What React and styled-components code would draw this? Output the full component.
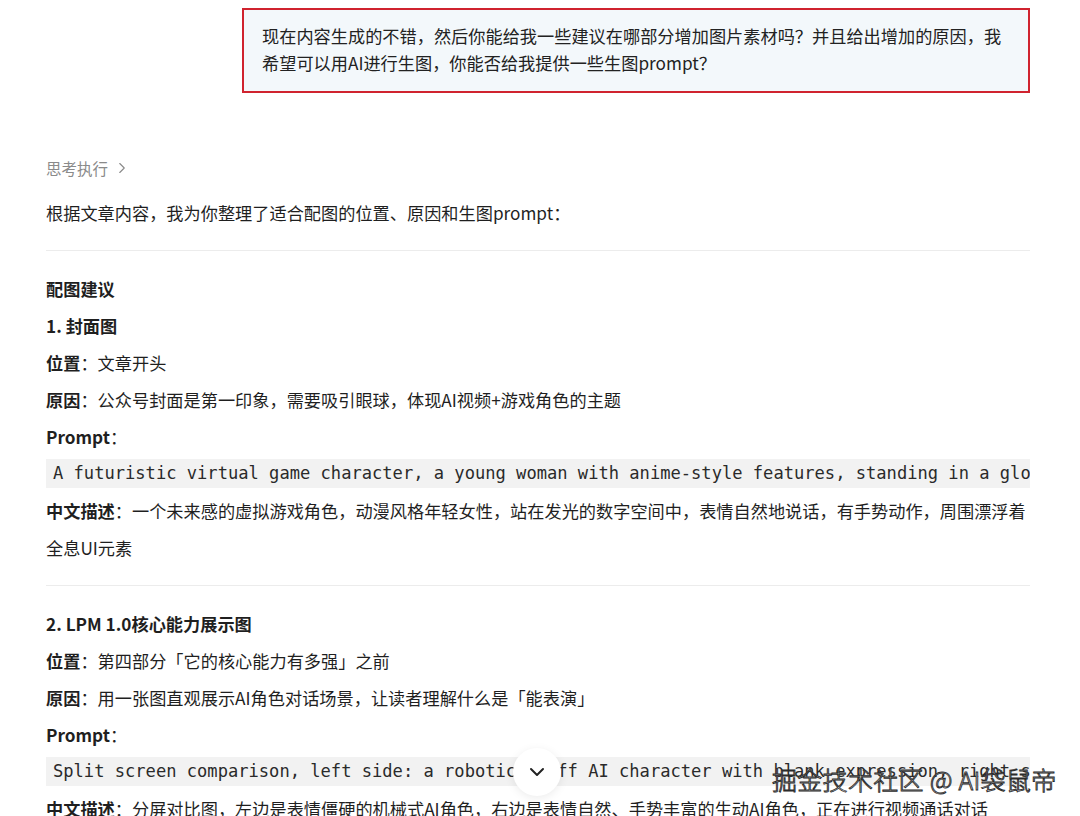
import React from 'react';
import styled, { createGlobalStyle } from 'styled-components';
import { ChevronRight, ChevronDown } from 'lucide-react';

const GlobalStyle = createGlobalStyle`
    html, body {
        margin: 0;
        padding: 0;
        background: #ffffff;
        overflow: hidden;
    }
    body {
        font-family: "Noto Sans CJK SC", "Noto Sans", sans-serif;
        color: #1f1f1f;
    }
`

const sections = [
    {
        title: '1. 封面图',
        position: '文章开头',
        reason: '公众号封面是第一印象，需要吸引眼球，体现AI视频+游戏角色的主题',
        prompt: 'A futuristic virtual game character, a young woman with anime-style features, standing in a glowing digital space, speaking naturally with hand gestures, holographic UI elements floating around',
        desc: '一个未来感的虚拟游戏角色，动漫风格年轻女性，站在发光的数字空间中，表情自然地说话，有手势动作，周围漂浮着全息UI元素',
    },
    {
        title: '2. LPM 1.0核心能力展示图',
        position: '第四部分「它的核心能力有多强」之前',
        reason: '用一张图直观展示AI角色对话场景，让读者理解什么是「能表演」',
        prompt: 'Split screen comparison, left side: a robotic stiff AI character with blank expression, right side: a lively AI character with natural expressions',
        desc: '分屏对比图，左边是表情僵硬的机械式AI角色，右边是表情自然、手势丰富的生动AI角色，正在进行视频通话对话',
    },
];

export default function App() {
    return (
        <Page>
            <GlobalStyle />
            {/* 用户提问 */}
            <UserBubble>
                现在内容生成的不错，然后你能给我一些建议在哪部分增加图片素材吗？并且给出增加的原因，我希望可以用AI进行生图，你能否给我提供一些生图prompt？
            </UserBubble>

            <ThinkRow>
                思考执行
                <ChevronRight size={18} strokeWidth={1.5} />
            </ThinkRow>
            <Para>根据文章内容，我为你整理了适合配图的位置、原因和生图prompt：</Para>
            <Divider />
            <Para $bold>配图建议</Para>

            {sections.map((s, i) => (
                <Section key={i}>
                    {i > 0 && <Divider />}
                    <Para $bold>{s.title}</Para>
                    <Para><Label>位置</Label>：{s.position}</Para>
                    <Para><Label>原因</Label>：{s.reason}</Para>
                    <Para><Label>Prompt</Label>：</Para>
                    <CodeBlock>{s.prompt}</CodeBlock>
                    <Para><Label>中文描述</Label>：{s.desc}</Para>
                </Section>
            ))}

            <ScrollButton>
                <ChevronDown size={24} strokeWidth={2} />
            </ScrollButton>
            <Watermark>掘金技术社区 @ AI袋鼠帝</Watermark>
        </Page>
    )
}

const Page = styled.div`
    position: relative;
    height: 816px;
    overflow: hidden;
    box-sizing: border-box;
    padding: 8px 50px 0 46px;
`
const UserBubble = styled.div`
    margin-left: auto;
    width: 788px;
    box-sizing: border-box;
    border: 2px solid #d0232f;
    background: #f3f8fb;
    padding: 12px 24px 15px 18px;
    font-size: 17.2px;
    line-height: 27px;
    color: #222;
`
const ThinkRow = styled.div`
    margin-top: 56px;
    margin-bottom: 8px;
    display: flex;
    align-items: center;
    gap: 5px;
    height: 37px;
    font-size: 15.5px;
    color: #8a8a8a;
`
const Section = styled.div`
`
const Para = styled.div`
    font-size: 17.2px;
    line-height: 37px;
    font-weight: ${p => (p.$bold ? 700 : 400)};
    color: #1f1f1f;
`
const Label = styled.span`
    font-weight: 700;
`
const Divider = styled.div`
    height: 1px;
    background: #ececec;
    margin: 19px 0 19px;
`
const CodeBlock = styled.div`
    margin: 4px 0;
    height: 29px;
    line-height: 29px;
    padding-left: 7px;
    background: #f2f2f2;
    font-family: "DejaVu Sans Mono", "Liberation Mono", monospace;
    font-size: 17.1px;
    color: #2a2a2a;
    white-space: pre;
    overflow: hidden;
`
const ScrollButton = styled.div`
    position: absolute;
    left: 513px;
    top: 748px;
    width: 48px;
    height: 48px;
    border-radius: 50%;
    background: #ffffff;
    box-shadow: 0 2px 10px rgba(0, 0, 0, 0.08);
    display: flex;
    align-items: center;
    justify-content: center;
    color: #222;
`
const Watermark = styled.div`
    position: absolute;
    left: 772px;
    top: 761px;
    font-size: 25px;
    letter-spacing: 0.3px;
    font-weight: 300;
    color: #ffffff;
    -webkit-text-stroke: 0.9px #2a2a2a;
    white-space: nowrap;
`
